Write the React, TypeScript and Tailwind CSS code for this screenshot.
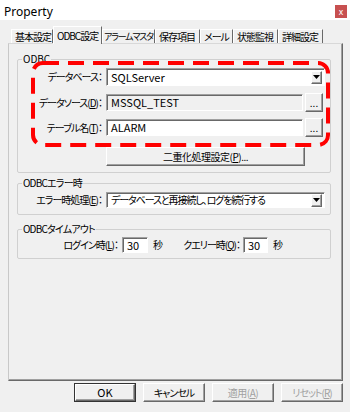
import React from 'react';

const raised =
  'border-t border-l border-t-white border-l-white border-r border-b border-r-[#696969] border-b-[#696969] shadow-[inset_-1px_-1px_0_#a0a0a0] bg-[#f0f0f0]';
const sunken =
  'border-t border-l border-t-[#a0a0a0] border-l-[#a0a0a0] border-r border-b border-r-white border-b-white shadow-[inset_1px_1px_0_#696969]';

const Field: React.FC<{ value: string; className?: string; bg?: string }> = ({ value, className = '', bg = 'bg-white' }) => (
  <div className={`${sunken} ${bg} ${className} flex items-center pl-[4px] text-[11px] text-black leading-none`}>{value}</div>
);

const Combo: React.FC<{ value: string; className?: string; small?: boolean }> = ({ value, className = '', small }) => (
  <div className={`${sunken} bg-white ${className} flex items-center pl-[4px] pr-[2px] leading-none`}>
    <span className={`flex-1 whitespace-nowrap ${small ? 'text-[10px] tracking-[-1.1px]' : 'text-[11px]'}`}>{value}</span>
    <div className={`${raised} w-[11px] h-[13px] flex items-center justify-center`}>
      <svg width="7" height="4" viewBox="0 0 7 4">
        <path d="M0 0h7L3.5 4z" fill="#000" />
      </svg>
    </div>
  </div>
);

const Btn: React.FC<{ label: React.ReactNode; className?: string; disabled?: boolean; def?: boolean }> = ({
  label,
  className = '',
  disabled,
  def,
}) => (
  <div className={`${def ? 'border border-[#333]' : ''} ${className}`}>
    <div
      className={`${raised} w-full h-full flex items-center justify-center leading-none ${
        disabled ? 'text-[#a0a0a0]' : 'text-black'
      }`}
    >
      {label}
    </div>
  </div>
);

const U: React.FC<{ c: string }> = ({ c }) => <span className="underline underline-offset-1">{c}</span>;

const tabs = [
  { label: '基本設定', w: 'w-[42px] pl-[3px]', t: 'tracking-[-1px]' },
  { label: 'ODBC設定', w: 'w-[49px] pl-[3px]', t: 'tracking-[-1px]', active: true },
  { label: 'アラームマスタ', w: 'w-[53px] pl-[1px]', t: 'text-[9px] tracking-[-1.2px]' },
  { label: '保存項目', w: 'w-[45px] pl-[3px]', t: 'tracking-[-1px]' },
  { label: 'メール', w: 'w-[33px] pl-[3px]', t: 'tracking-[-1px]' },
  { label: '状態監視', w: 'w-[45px] pl-[3px]', t: 'tracking-[-1px]' },
  { label: '詳細設定', w: 'w-[45px] pl-[3px]', t: 'tracking-[-1px]' },
];

const label = 'text-right tracking-[-1px] leading-none whitespace-nowrap';

const App: React.FC = () => {
  return (
    <div
      className="relative w-[350px] h-[412px] bg-[#f0f0f0] text-[10px] text-black overflow-hidden [font-feature-settings:'palt'_1]"
      style={{ fontFamily: '"Noto Sans CJK JP", "Noto Sans", sans-serif' }}
    >
      {/* title bar */}
      <div className="h-[20px] bg-white flex items-center justify-between pl-[4px] pr-[3px]">
        <span className="text-[12px] leading-none mt-[3px]" style={{ fontFamily: '"Noto Sans", sans-serif' }}>
          Property
        </span>
        <div className="w-[12px] h-[13px] mt-[3px] bg-[#c75050] flex items-center justify-center text-white text-[9px] leading-none">
          x
        </div>
      </div>

      {/* tabs */}
      <div className="pt-[6px]">
        <div className="flex items-end h-[17px] pl-[11px]">
          {tabs.map((t, i) => (
            <div
              key={i}
              className={`${t.w} ${t.t} shrink-0 flex items-center whitespace-nowrap leading-none border-t border-l border-t-white border-l-white border-r border-r-[#696969] bg-[#f0f0f0] ${
                t.active ? 'h-[18px] relative z-10 -mb-px' : 'h-[14px]'
              }`}
            >
              {t.label}
            </div>
          ))}
        </div>

        {/* tab page */}
        <div className="ml-[8px] w-[335px] h-[338px] border-t border-l border-t-[#d8d8d8] border-l-[#c8c8c8] border-r border-b border-r-[#696969] border-b-[#696969] shadow-[inset_-1px_-1px_0_#a0a0a0] pl-[8px]">
          {/* ODBC */}
          <fieldset className="mt-[8px] w-[314px] h-[121px] border border-[#d0d0d0] rounded-[2px]">
            <legend className="ml-[4px] px-[1px] leading-[14px]">ODBC</legend>
            <div className="flex flex-col pt-[2px]">
              <div className="flex items-center h-[18px]">
                <span className={`w-[88px] pr-[4px] ${label}`}>データベース：</span>
                <Combo value="SQLServer" className="w-[219px] h-[18px]" />
              </div>
              <div className="flex items-center h-[19px] mt-[7px]">
                <span className={`w-[88px] pr-[4px] ${label}`}>
                  データソース(<U c="D" />)：
                </span>
                <Field value="MSSQL_TEST" bg="bg-[#f0f0f0]" className="w-[197px] h-[17px]" />
                <Btn label="..." className="ml-[2px] w-[18px] h-[19px]" />
              </div>
              <div className="flex items-center h-[19px] mt-[6px]">
                <span className={`w-[88px] pr-[4px] ${label}`}>
                  テーブル名(<U c="T" />)：
                </span>
                <Field value="ALARM" className="w-[197px] h-[17px]" />
                <Btn label="..." className="ml-[2px] w-[18px] h-[19px]" />
              </div>
              <Btn
                label={
                  <span className="tracking-[-0.5px]">
                    二重化処理設定(<U c="P" />)...
                  </span>
                }
                className="ml-[88px] mt-[10px] w-[199px] h-[19px]"
              />
            </div>
          </fieldset>

          {/* error */}
          <fieldset className="mt-[3px] w-[314px] h-[39px] border border-[#d0d0d0] rounded-[2px]">
            <legend className="ml-[4px] px-[1px] leading-[14px] tracking-[-0.8px]">ODBCエラー時</legend>
            <div className="flex items-center pt-[2px]">
              <span className={`w-[88px] pr-[4px] ${label}`}>
                エラー時処理(<U c="E" />)：
              </span>
              <Combo value="データベースと再接続し、ログを続行する" small className="w-[219px] h-[16px]" />
            </div>
          </fieldset>

          {/* timeout */}
          <fieldset className="mt-[7px] w-[314px] h-[37px] border border-[#d0d0d0] rounded-[2px]">
            <legend className="ml-[4px] px-[1px] leading-[14px] tracking-[-0.8px]">ODBCタイムアウト</legend>
            <div className="flex items-center pt-[1px] h-[17px]">
              <span className={`w-[104px] pr-[4px] ${label}`}>
                ログイン時(<U c="L" />)：
              </span>
              <Field value="30" className="w-[26px] h-[16px]" />
              <span className="ml-[5px] w-[12px] leading-none">秒</span>
              <span className={`w-[78px] pr-[3px] ${label}`}>
                クエリー時(<U c="Q" />)：
              </span>
              <Field value="30" className="w-[25px] h-[16px]" />
              <span className="ml-[5px] leading-none">秒</span>
            </div>
          </fieldset>
        </div>

        {/* dialog buttons */}
        <div className="flex gap-[7px] pl-[74px] mt-[2px]">
          <Btn label={<span className="text-[11px]">OK</span>} def className="w-[62px] h-[19px]" />
          <Btn label={<span className="tracking-[-1px]">キャンセル</span>} className="w-[62px] h-[19px]" />
          <Btn
            label={
              <span className="tracking-[-0.5px]">
                適用(<U c="A" />)
              </span>
            }
            disabled
            className="w-[62px] h-[19px]"
          />
          <Btn
            label={
              <span className="tracking-[-1px]">
                リセット(<U c="R" />)
              </span>
            }
            disabled
            className="w-[62px] h-[19px]"
          />
        </div>
      </div>

      {/* red highlight annotation */}
      <svg className="absolute left-[31px] top-[61px]" width="299" height="86" viewBox="0 0 299 86">
        <rect
          x="2"
          y="2"
          width="295"
          height="82"
          rx="10"
          fill="none"
          stroke="#ff0000"
          strokeWidth="4"
          strokeDasharray="16 9"
        />
      </svg>
    </div>
  );
};

export default App;
